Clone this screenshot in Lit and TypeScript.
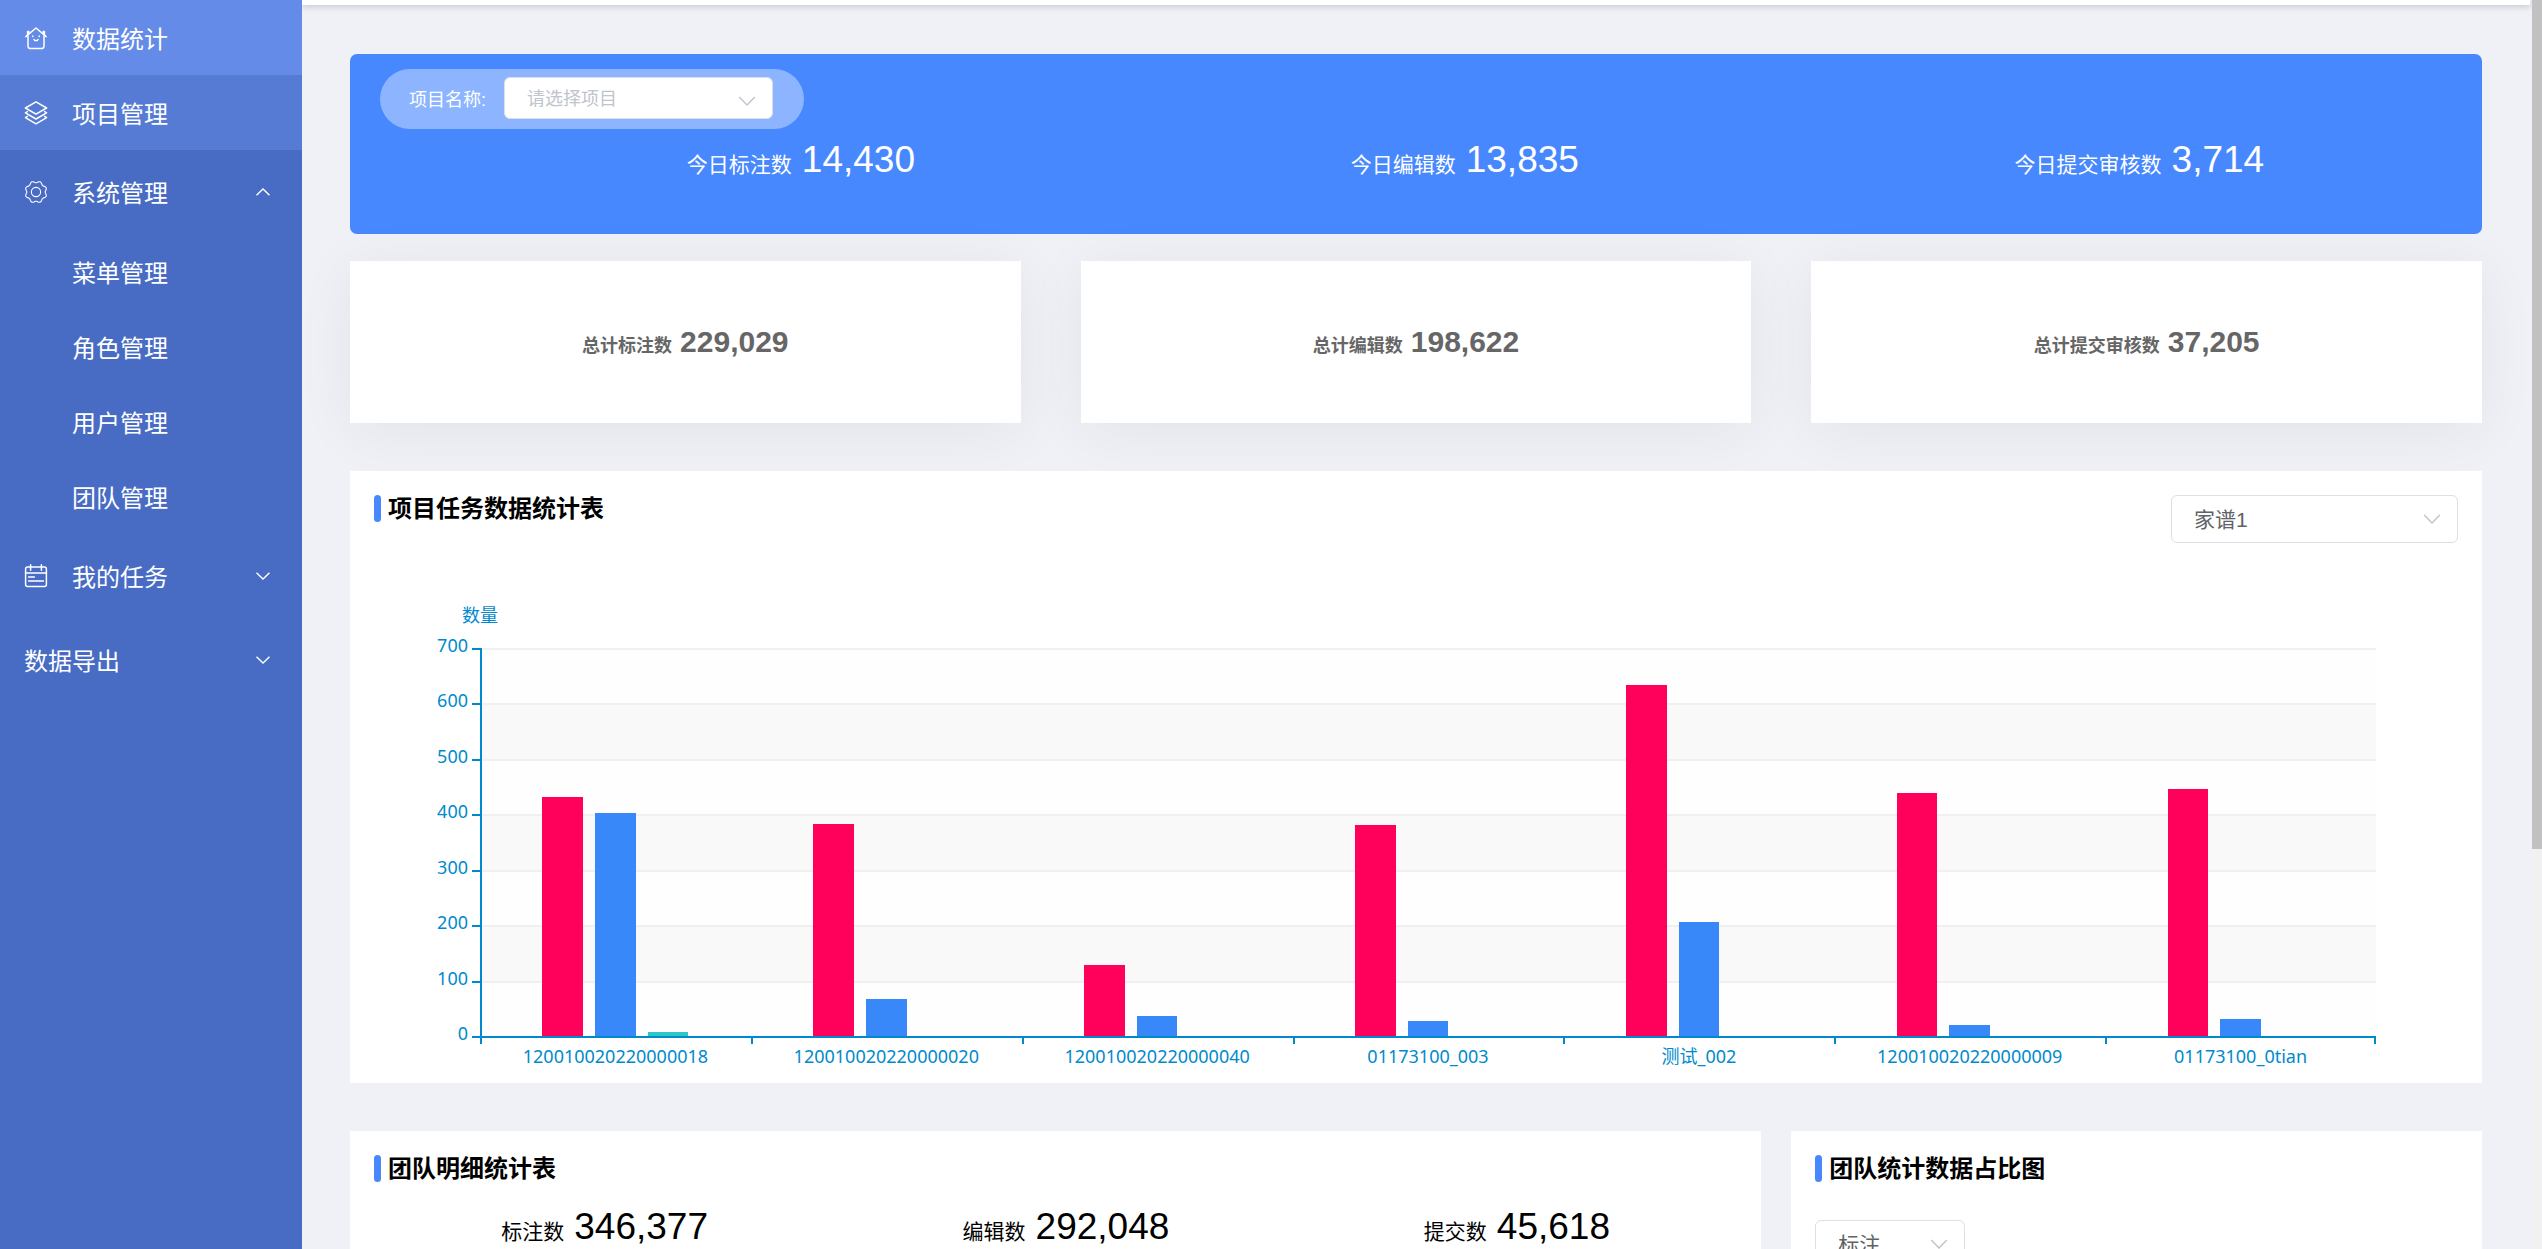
import { LitElement, html, css, svg, nothing } from "lit";
import { customElement, property } from "lit/decorators.js";
import { styleMap } from "lit/directives/style-map.js";

// Outline of a cog with eight soft teeth, centred in a 24 unit box.
const cog = Array.from({ length: 96 }, (_, i) => {
  const a = (i / 96) * Math.PI * 2;
  const r = 10.1 - 0.9 * Math.cos(8 * a);
  return `${(12 + r * Math.cos(a)).toFixed(2)},${(12 + r * Math.sin(a)).toFixed(2)}`;
}).join(" ");

const icons: Record<string, unknown> = {
  home: svg`
    <path d="M1.800 10.600 12 2l10.200 8.600" />
    <path d="M3.600 9V5.600h1.200V8" />
    <path d="M20.400 9V5.600h-1.200V8" />
    <path d="M4 10v10.200a2.400 2.400 0 0 0 2.400 2.400h11.200a2.400 2.400 0 0 0 2.400-2.400V10" />
    <path d="M10 13.400c.3 1.700 3.700 1.700 4 0" />
    <path d="M8.800 10v.6M15.200 10v.6" />`,
  layers: svg`
    <path d="M12 .8 22.600 7 12 13.200 1.400 7z" />
    <path d="m3.400 10.600-2 1.200L12 18l10.600-6.200-2-1.200" />
    <path d="m3.400 15.400-2 1.200L12 22.800l10.600-6.200-2-1.200" />`,
  gear: svg`
    <polygon points=${cog} />
    <circle cx="12" cy="12" r="4.600" />`,
  calendar: svg`
    <rect x="1.600" y="3" width="20.800" height="19.400" rx="2" />
    <path d="M1.600 9h20.800M6.600.8v5.400M17.400.8v5.400M4.600 13h5.800M4.600 17h14.800" />`,
};

interface MenuEntry {
  label: string;
  icon?: string;
  state?: "active" | "hover";
  open?: boolean;
  children?: string[];
}

const menu: MenuEntry[] = [
  { label: "数据统计", icon: "home", state: "active" },
  { label: "项目管理", icon: "layers", state: "hover" },
  {
    label: "系统管理",
    icon: "gear",
    open: true,
    children: ["菜单管理", "角色管理", "用户管理", "团队管理"],
  },
  { label: "我的任务", icon: "calendar", children: [] },
  { label: "数据导出", children: [] },
];

@customElement("side-menu")
export class SideMenu extends LitElement {
  static styles = css`
    :host {
      display: block;
      background: #486cc4;
      color: #fff;
      font-size: 24px;
      line-height: 36px;
    }
    .list {
      list-style: none;
      margin: 0;
      padding: 0;
    }
    .item {
      box-sizing: border-box;
      display: flex;
      align-items: center;
      gap: 24px;
      width: 100%;
      height: 75px;
      padding: 0 32px 0 24px;
      border: 0;
      background: none;
      color: inherit;
      font: inherit;
      text-align: left;
      text-decoration: none;
      cursor: pointer;
    }
    .active {
      background: #638be7;
    }
    .hover {
      background: #557bd4;
    }
    .group {
      height: 84px;
    }
    .child {
      padding-left: 72px;
    }
    .label {
      flex: 1;
      padding-top: 4px;
    }
    .icon {
      width: 24px;
      height: 24px;
      fill: none;
      stroke: #fff;
      stroke-width: 1.5;
      stroke-linejoin: round;
      stroke-linecap: round;
    }
    .gear {
      stroke-width: 1.1;
    }
    .arrow {
      width: 14px;
      height: 8px;
      fill: none;
      stroke: #fff;
      stroke-width: 1.4;
    }
    .up {
      transform: rotate(180deg);
    }
  `;

  private icon(name?: string) {
    return name
      ? html`<svg class="icon ${name}" viewBox="0 0 24 24" aria-hidden="true">${icons[name]}</svg>`
      : nothing;
  }

  render() {
    return html`<nav>
      <ul class="list">
        ${menu.map((m) =>
          m.children
            ? html`<li>
                <button class="item group" aria-expanded=${m.open ? "true" : "false"}>
                  ${this.icon(m.icon)}<span class="label">${m.label}</span>
                  <svg class="arrow ${m.open ? "up" : ""}" viewBox="0 0 14 8" aria-hidden="true">
                    <path d="m.5.700 6.500 6.300L13.500.700" />
                  </svg>
                </button>
                ${m.open
                  ? html`<ul class="list">
                      ${m.children.map(
                        (c) => html`<li><a class="item child" href="#"><span class="label">${c}</span></a></li>`
                      )}
                    </ul>`
                  : nothing}
              </li>`
            : html`<li>
                <a class="item ${m.state ?? ""}" href="#">
                  ${this.icon(m.icon)}<span class="label">${m.label}</span>
                </a>
              </li>`
        )}
      </ul>
    </nav>`;
  }
}

@customElement("drop-down")
export class DropDown extends LitElement {
  @property() label = "";
  @property() value = "";
  @property({ type: Boolean }) caption = false;
  @property({ type: Boolean }) small = false;

  static styles = css`
    :host {
      display: block;
    }
    .field {
      display: flex;
      align-items: center;
      gap: 18px;
    }
    .caption {
      flex: none;
      color: #fff;
      font-size: 18px;
    }
    .box {
      flex: 1;
      display: grid;
      align-items: center;
    }
    .select,
    .arrow {
      grid-area: 1 / 1;
    }
    .select {
      appearance: none;
      box-sizing: border-box;
      width: 100%;
      height: 48px;
      padding: 0 48px 0 22px;
      border: 1px solid #dcdfe6;
      border-radius: 6px;
      background: #fff;
      color: #606266;
      font-family: inherit;
      font-size: 21px;
    }
    .small {
      height: 42px;
      padding-top: 2px;
      color: #c0c4cc;
      font-size: 18px;
    }
    .arrow {
      justify-self: end;
      width: 18px;
      height: 12px;
      margin-right: 17px;
      fill: none;
      stroke: #c0c4cc;
      stroke-width: 1.5;
      pointer-events: none;
    }
    .low {
      margin-top: 6px;
    }
  `;

  render() {
    return html`<div class="field">
      ${this.caption ? html`<label class="caption" for="choice">${this.label}</label>` : nothing}
      <div class="box">
        <select
          id="choice"
          class="select ${this.small ? "small" : ""}"
          aria-label=${this.caption ? nothing : this.label}
        >
          <option>${this.value}</option>
        </select>
        <svg class="arrow ${this.small ? "low" : ""}" viewBox="0 0 18 12" aria-hidden="true">
          <path d="m1.200 2 7.800 8 7.800-8" />
        </svg>
      </div>
    </div>`;
  }
}

interface Stat {
  label: string;
  value: number;
}

@customElement("stat-figure")
export class StatFigure extends LitElement {
  @property() label = "";
  @property({ type: Number }) value = 0;
  @property({ type: Boolean }) total = false;

  static styles = css`
    :host {
      display: block;
    }
    .figure {
      display: flex;
      align-items: baseline;
      gap: 10px;
      line-height: 54px;
    }
    .label {
      font-size: 21px;
    }
    .value {
      font-size: 37px;
    }
    .total {
      gap: 8px;
      color: #666;
      font-weight: bold;
    }
    .total .label {
      font-size: 18px;
    }
    .total .value {
      font-size: 30px;
    }
  `;

  render() {
    return html`<div class="figure ${this.total ? "total" : ""}">
      <span class="label">${this.label}</span>
      <span class="value">${this.value.toLocaleString("en-US")}</span>
    </div>`;
  }
}

const MAX = 700;
const scale = [700, 600, 500, 400, 300, 200, 100, 0];
const tasks: { name: string; values: number[] }[] = [
  { name: "120010020220000018", values: [432, 403, 8] },
  { name: "120010020220000020", values: [382, 66, 0] },
  { name: "120010020220000040", values: [129, 37, 0] },
  { name: "01173100_003", values: [381, 27, 0] },
  { name: "测试_002", values: [634, 205, 0] },
  { name: "120010020220000009", values: [439, 19, 0] },
  { name: "01173100_0tian", values: [446, 31, 0] },
];
const series = ["marked", "edited", "submitted"];

@customElement("task-chart")
export class TaskChart extends LitElement {
  static styles = css`
    :host {
      display: block;
      color: #008acd;
      font-family: "Noto Sans", "Noto Sans CJK SC", sans-serif;
      font-size: 18px;
      line-height: 24px;
    }
    .chart {
      display: grid;
      grid-template-columns: 106px 1fr;
      grid-template-rows: 105px 390px 45px;
      padding-right: 82px;
    }
    .name {
      align-self: end;
      justify-self: end;
      margin: 0 -18px 21px 0;
    }
    .scale {
      grid-row: 2;
      display: flex;
      flex-direction: column;
      padding-bottom: 2px;
    }
    .step {
      flex: 1 1 0;
      display: flex;
      align-items: flex-start;
      justify-content: flex-end;
      gap: 4px;
      height: 0;
    }
    .step:last-child {
      flex: 0 0 0;
    }
    .number {
      margin-top: -15px;
    }
    .mark {
      width: 8px;
      height: 2px;
      background: #008acd;
    }
    .plot {
      grid-row: 2;
      display: grid;
      border-left: 2px solid #008acd;
      border-bottom: 2px solid #008acd;
    }
    .bands,
    .groups {
      grid-area: 1 / 1;
    }
    .bands {
      display: flex;
      flex-direction: column;
    }
    .band {
      flex: 1;
      box-sizing: border-box;
      border-top: 2px solid #f0f0f0;
      background: #fefefe;
    }
    .band:nth-child(even) {
      background: #f9f9f9;
    }
    .groups,
    .names {
      display: grid;
      grid-template-columns: repeat(7, 1fr);
    }
    .groups {
      margin-left: -2px;
    }
    .group {
      display: flex;
      justify-content: center;
      align-items: flex-end;
      gap: 12px;
    }
    .bar {
      width: 15%;
    }
    .marked {
      background: #ff005a;
    }
    .edited {
      background: #3888fa;
    }
    .submitted {
      background: #2ec7c9;
    }
    .names {
      grid-area: 3 / 2;
      text-align: center;
    }
    .tick {
      height: 6px;
      border-left: 2px solid #008acd;
    }
    .category:last-child .tick {
      border-right: 2px solid #008acd;
    }
  `;

  render() {
    return html`<div class="chart">
      <div class="name">数量</div>
      <div class="scale">
        ${scale.map((n) => html`<div class="step"><span class="number">${n}</span><span class="mark"></span></div>`)}
      </div>
      <div class="plot">
        <div class="bands">${scale.slice(1).map(() => html`<div class="band"></div>`)}</div>
        <div class="groups">
          ${tasks.map(
            (t) => html`<div class="group">
              ${t.values.map(
                (v, i) => html`<div class="bar ${series[i]}" style=${styleMap({ height: `${(v / MAX) * 100}%` })}></div>`
              )}
            </div>`
          )}
        </div>
      </div>
      <div class="names">
        ${tasks.map((t) => html`<div class="category"><div class="tick"></div>${t.name}</div>`)}
      </div>
    </div>`;
  }
}

const today: Stat[] = [
  { label: "今日标注数", value: 14430 },
  { label: "今日编辑数", value: 13835 },
  { label: "今日提交审核数", value: 3714 },
];
const totals: Stat[] = [
  { label: "总计标注数", value: 229029 },
  { label: "总计编辑数", value: 198622 },
  { label: "总计提交审核数", value: 37205 },
];
const team: Stat[] = [
  { label: "标注数", value: 346377 },
  { label: "编辑数", value: 292048 },
  { label: "提交数", value: 45618 },
];

@customElement("app-root")
export class AppRoot extends LitElement {
  static styles = css`
    :host {
      display: flex;
      height: 100vh;
      overflow: hidden;
      background: #f0f1f6;
      color: #000;
      font-family: "Liberation Sans", "Noto Sans CJK SC", sans-serif;
    }
    .side {
      flex: 0 0 302px;
    }
    .page {
      flex: 1;
      min-width: 0;
      overflow: hidden;
    }
    .header {
      height: 5px;
      margin-right: 2px;
      background: #fff;
      box-shadow: 0 1px 6px rgba(0, 21, 41, 0.24);
    }
    .content {
      padding: 49px 50px 48px 48px;
    }
    .banner {
      box-sizing: border-box;
      height: 180px;
      padding: 15px 0 0 30px;
      border-radius: 7px;
      background: #4788ff;
      color: #fff;
    }
    .filter {
      display: flex;
      align-items: center;
      box-sizing: border-box;
      width: 424px;
      height: 60px;
      padding: 0 31px 2px 29px;
      border-radius: 30px;
      background: rgba(255, 255, 255, 0.38);
    }
    .picker {
      flex: 1;
    }
    .stats {
      display: flex;
      justify-content: space-around;
    }
    .today {
      padding: 4px 0 0 89px;
    }
    .totals {
      display: grid;
      grid-template-columns: repeat(3, 1fr);
      gap: 60px;
      margin-top: 27px;
    }
    .total {
      box-sizing: border-box;
      display: flex;
      align-items: center;
      justify-content: center;
      height: 162px;
      padding-top: 3px;
      background: #fff;
      box-shadow: 0 8px 60px rgba(0, 0, 0, 0.06);
    }
    .card {
      position: relative;
      padding: 24px 24px 0;
      background: #fff;
    }
    .tasks {
      margin-top: 48px;
    }
    .head {
      display: flex;
      align-items: flex-start;
      justify-content: space-between;
    }
    .title {
      display: flex;
      align-items: center;
      gap: 7px;
      margin: 0;
      font-size: 24px;
      line-height: 27px;
    }
    .title::before {
      content: "";
      width: 7px;
      height: 27px;
      border-radius: 4px;
      background: #4788ff;
    }
    .project {
      width: 287px;
    }
    .row {
      display: grid;
      grid-template-columns: calc((100% + 30px) * 2 / 3 - 30px) 1fr;
      gap: 30px;
      margin-top: 48px;
    }
    .team {
      padding-bottom: 120px;
    }
    .team .stats {
      margin-top: 18px;
    }
    .kind {
      width: 150px;
      margin-top: 38px;
    }
    .scrollbar {
      flex: 0 0 10px;
      background: #f1f1f1;
    }
    .thumb {
      height: 68%;
      background: #c1c1c1;
    }
  `;

  render() {
    return html`
      <side-menu class="side"></side-menu>
      <div class="page">
        <header class="header"></header>
        <main class="content">
          <section class="banner">
            <div class="filter">
              <drop-down class="picker" caption small label="项目名称:" value="请选择项目"></drop-down>
            </div>
            <div class="stats today">${this.figures(today)}</div>
          </section>
          <section class="totals">
            ${totals.map(
              (s) => html`<div class="total"><stat-figure total label=${s.label} .value=${s.value}></stat-figure></div>`
            )}
          </section>
          <section class="card tasks">
            <div class="head">
              <h2 class="title">项目任务数据统计表</h2>
              <drop-down class="project" label="项目" value="家谱1"></drop-down>
            </div>
            <task-chart></task-chart>
          </section>
          <div class="row">
            <section class="card team">
              <h2 class="title">团队明细统计表</h2>
              <div class="stats">${this.figures(team)}</div>
            </section>
            <section class="card">
              <h2 class="title">团队统计数据占比图</h2>
              <drop-down class="kind" label="类型" value="标注"></drop-down>
            </section>
          </div>
        </main>
      </div>
      <div class="scrollbar"><div class="thumb"></div></div>
    `;
  }

  private figures(stats: Stat[]) {
    return stats.map((s) => html`<stat-figure label=${s.label} .value=${s.value}></stat-figure>`);
  }
}
